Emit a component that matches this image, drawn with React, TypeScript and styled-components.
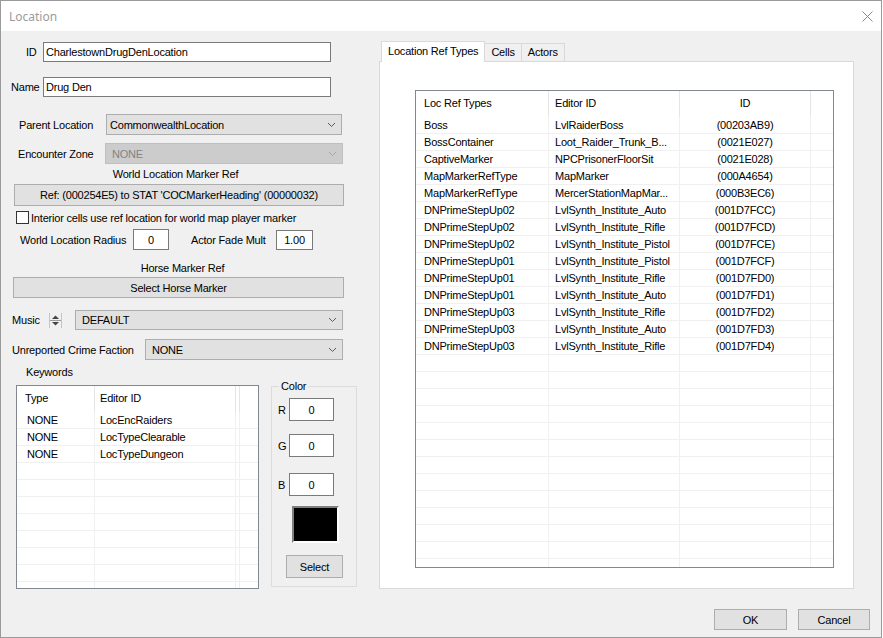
import React from 'react';
import styled, { createGlobalStyle } from 'styled-components';

const GlobalStyle = createGlobalStyle`
  * { box-sizing: border-box; }
  html, body { margin: 0; padding: 0; background: #ffffff; }
  body {
    font-family: "Liberation Sans", Arial, sans-serif;
    font-size: 11px;
    letter-spacing: -0.2px;
    color: #000;
  }
`;

const Window = styled.div`
  width: 882px;
  height: 638px;
  border: 1px solid #9a9a9a;
  background: #f0f0f0;
  display: flex;
  flex-direction: column;
`;

const TitleBar = styled.div`
  height: 30px;
  flex: none;
  background: #fff;
  display: flex;
  align-items: center;
  justify-content: space-between;
  padding: 0 8px 0 8px;
`;

const TitleText = styled.span`
  font-family: "Noto Sans", "Liberation Sans", sans-serif;
  font-size: 12px;
  letter-spacing: 0;
  color: #9b9b9b;
`;

const Main = styled.div`
  display: flex;
  height: 558px;
  flex: none;
`;

const LeftPanel = styled.div`
  width: 378px;
  flex: none;
  display: flex;
  flex-direction: column;
`;

const Row = styled.div<{ $mt: number; $pl: number; $h: number }>`
  display: flex;
  align-items: center;
  flex: none;
  margin-top: ${p => p.$mt}px;
  padding-left: ${p => p.$pl}px;
  height: ${p => p.$h}px;
`;

const Label = styled.span<{ $w?: number; $ml?: number }>`
  flex: none;
  width: ${p => (p.$w ? `${p.$w}px` : 'auto')};
  margin-left: ${p => p.$ml ?? 0}px;
  white-space: nowrap;
`;

const Caption = styled.div<{ $mt: number; $pl: number; $w: number }>`
  flex: none;
  margin-top: ${p => p.$mt}px;
  margin-left: ${p => p.$pl}px;
  width: ${p => p.$w}px;
  line-height: 13px;
  text-align: center;
  white-space: nowrap;
`;

const TextBox = styled.input<{ $w: number; $h: number; $center?: boolean }>`
  flex: none;
  width: ${p => p.$w}px;
  height: ${p => p.$h}px;
  border: 1px solid #7a7a7a;
  background: #fff;
  padding: 0 2px;
  margin: 0;
  font: inherit;
  letter-spacing: inherit;
  color: #000;
  text-align: ${p => (p.$center ? 'center' : 'left')};
  outline: none;
`;

const Combo = styled.div<{ $w: number; $h: number; $pad: number; $disabled?: boolean }>`
  flex: none;
  width: ${p => p.$w}px;
  height: ${p => p.$h}px;
  display: flex;
  align-items: center;
  justify-content: space-between;
  padding: 0 6px 0 ${p => p.$pad}px;
  background: ${p => (p.$disabled ? '#cccccc' : '#e1e1e1')};
  border: 1px solid ${p => (p.$disabled ? '#bfbfbf' : '#adadad')};
  color: ${p => (p.$disabled ? '#838383' : '#000')};
  white-space: nowrap;
`;

const Button = styled.button<{ $w: number; $h: number; $ml?: number; $mt?: number }>`
  flex: none;
  width: ${p => p.$w}px;
  height: ${p => p.$h}px;
  margin: ${p => p.$mt ?? 0}px 0 0 ${p => p.$ml ?? 0}px;
  padding: 0;
  background: #e1e1e1;
  border: 1px solid #adadad;
  font: inherit;
  letter-spacing: inherit;
  color: #000;
  white-space: nowrap;
`;

const CheckBox = styled.span`
  flex: none;
  width: 13px;
  height: 13px;
  border: 1px solid #333;
  background: #fff;
  margin-right: 2px;
`;

const BottomArea = styled.div`
  display: flex;
  align-items: flex-start;
  margin-top: 6px;
  padding-left: 15px;
`;

const KeywordsColumn = styled.div`
  display: flex;
  flex-direction: column;
`;

const ColorGroup = styled.fieldset`
  margin: 14px 0 0 12px;
  padding: 0;
  width: 86px;
  height: 207px;
  min-width: 0;
  border: 1px solid #dcdcdc;
  display: flex;
  flex-direction: column;
`;

const Legend = styled.legend`
  margin-left: 7px;
  padding: 0 2px;
  line-height: 13px;
`;

const ColorRow = styled.div<{ $mt: number }>`
  display: flex;
  align-items: center;
  margin-top: ${p => p.$mt}px;
  padding-left: 6px;
`;

const Swatch = styled.div<{ $color: string }>`
  width: 47px;
  height: 37px;
  margin: 10px 0 0 20px;
  background: ${p => p.$color};
  border-style: solid;
  border-width: 2px;
  border-color: #7f7f7f #ffffff #ffffff #7f7f7f;
`;

const RightPanel = styled.div`
  display: flex;
  flex-direction: column;
  padding-top: 10px;
`;

const TabStrip = styled.div`
  display: flex;
  align-items: flex-end;
  height: 20px;
  padding-left: 2px;
`;

const Tab = styled.div<{ $active?: boolean }>`
  position: relative;
  z-index: ${p => (p.$active ? 1 : 0)};
  height: ${p => (p.$active ? 21 : 18)}px;
  margin-bottom: ${p => (p.$active ? -1 : 0)}px;
  padding: ${p => (p.$active ? '3px 6px 0' : '2px 6px 0')};
  background: ${p => (p.$active ? '#ffffff' : '#f0f0f0')};
  border: 1px solid #d9d9d9;
  border-bottom: none;
  border-left-width: ${p => (p.$active ? 1 : 0)}px;
  white-space: nowrap;
`;

const TabPanel = styled.div`
  width: 475px;
  height: 528px;
  background: #fff;
  border: 1px solid #d9d9d9;
  padding: 28px 0 0 35px;
`;

const Footer = styled.div`
  display: flex;
  justify-content: flex-end;
  gap: 11px;
  padding: 20px 11px 0 0;
`;

/* list view */

const ListFrame = styled.div<{ $w: number; $h: number; $mt?: number }>`
  flex: none;
  width: ${p => p.$w}px;
  height: ${p => p.$h}px;
  margin-top: ${p => p.$mt ?? 0}px;
  border: 1px solid #828790;
  background: #fff;
  overflow: hidden;
`;

const HeadRow = styled.div<{ $h: number }>`
  display: flex;
  height: ${p => p.$h}px;
`;

const HeadCell = styled.div<{ $w?: number; $pad: number; $center?: boolean }>`
  flex: ${p => (p.$w ? `0 0 ${p.$w}px` : '1 1 auto')};
  display: flex;
  align-items: center;
  justify-content: ${p => (p.$center ? 'center' : 'flex-start')};
  padding-left: ${p => (p.$center ? 0 : p.$pad)}px;
  padding-bottom: 2px;
  border-right: 1px solid #e5e5e5;
  white-space: nowrap;
  overflow: hidden;
  &:last-child { border-right: none; }
`;

const BodyRow = styled.div`
  display: flex;
  height: 17px;
  border-bottom: 1px solid #f0f0f0;
`;

const Cell = styled.div<{ $w?: number; $pad: number; $center?: boolean }>`
  flex: ${p => (p.$w ? `0 0 ${p.$w}px` : '1 1 auto')};
  display: flex;
  align-items: center;
  justify-content: ${p => (p.$center ? 'center' : 'flex-start')};
  padding-left: ${p => (p.$center ? 0 : p.$pad)}px;
  border-right: 1px solid #f0f0f0;
  white-space: nowrap;
  overflow: hidden;
  &:last-child { border-right: none; }
`;

interface Column {
  w?: number;
  head: string;
  hpad: number;
  bpad: number;
  center?: boolean;
}

interface ListProps {
  w: number;
  h: number;
  mt?: number;
  headH: number;
  columns: Column[];
  rows: string[][];
  total: number;
}

const ListView = ({ w, h, mt, headH, columns, rows, total }: ListProps) => (
  <ListFrame $w={w} $h={h} $mt={mt}>
    <HeadRow $h={headH}>
      {columns.map((c, i) => (
        <HeadCell key={i} $w={c.w} $pad={c.hpad} $center={c.center}>
          {c.head}
        </HeadCell>
      ))}
    </HeadRow>
    {Array.from({ length: total }).map((_, r) => (
      <BodyRow key={r}>
        {columns.map((c, i) => (
          <Cell key={i} $w={c.w} $pad={c.bpad} $center={c.center}>
            {rows[r]?.[i] ?? ''}
          </Cell>
        ))}
      </BodyRow>
    ))}
  </ListFrame>
);

const Chevron = ({ color = '#5a5a5a' }: { color?: string }) => (
  <svg width="7" height="4" viewBox="0 0 7 4">
    <polyline points="0,0 3.5,3.5 7,0" fill="none" stroke={color} strokeWidth="1" />
  </svg>
);

const Spinner = () => (
  <svg width="13" height="15" viewBox="0 0 13 15" style={{ flex: 'none', marginRight: 13 }}>
    <line x1="0.5" y1="0" x2="0.5" y2="15" stroke="#c4c4c4" />
    <line x1="12.5" y1="0" x2="12.5" y2="15" stroke="#c4c4c4" />
    <polygon points="3,6 10,6 6.5,2.5" fill="#444" />
    <line x1="1" y1="7.5" x2="12" y2="7.5" stroke="#9a9a9a" />
    <polygon points="3,9 10,9 6.5,12.5" fill="#444" />
  </svg>
);

const CloseIcon = () => (
  <svg width="11" height="11" viewBox="0 0 11 11">
    <line x1="0.5" y1="0.5" x2="10.5" y2="10.5" stroke="#8a8a8a" />
    <line x1="10.5" y1="0.5" x2="0.5" y2="10.5" stroke="#8a8a8a" />
  </svg>
);

const refRows = [
  ['Boss', 'LvlRaiderBoss', '(00203AB9)'],
  ['BossContainer', 'Loot_Raider_Trunk_B...', '(0021E027)'],
  ['CaptiveMarker', 'NPCPrisonerFloorSit', '(0021E028)'],
  ['MapMarkerRefType', 'MapMarker', '(000A4654)'],
  ['MapMarkerRefType', 'MercerStationMapMar...', '(000B3EC6)'],
  ['DNPrimeStepUp02', 'LvlSynth_Institute_Auto', '(001D7FCC)'],
  ['DNPrimeStepUp02', 'LvlSynth_Institute_Rifle', '(001D7FCD)'],
  ['DNPrimeStepUp02', 'LvlSynth_Institute_Pistol', '(001D7FCE)'],
  ['DNPrimeStepUp01', 'LvlSynth_Institute_Pistol', '(001D7FCF)'],
  ['DNPrimeStepUp01', 'LvlSynth_Institute_Rifle', '(001D7FD0)'],
  ['DNPrimeStepUp01', 'LvlSynth_Institute_Auto', '(001D7FD1)'],
  ['DNPrimeStepUp03', 'LvlSynth_Institute_Rifle', '(001D7FD2)'],
  ['DNPrimeStepUp03', 'LvlSynth_Institute_Auto', '(001D7FD3)'],
  ['DNPrimeStepUp03', 'LvlSynth_Institute_Rifle', '(001D7FD4)'],
];

const refColumns: Column[] = [
  { w: 133, head: 'Loc Ref Types', hpad: 8, bpad: 8 },
  { w: 131, head: 'Editor ID', hpad: 6, bpad: 6 },
  { w: 131, head: 'ID', hpad: 0, bpad: 0, center: true },
  { head: '', hpad: 0, bpad: 0 },
];

const keywordRows = [
  ['NONE', 'LocEncRaiders'],
  ['NONE', 'LocTypeClearable'],
  ['NONE', 'LocTypeDungeon'],
];

const keywordColumns: Column[] = [
  { w: 78, head: 'Type', hpad: 8, bpad: 10 },
  { w: 141, head: 'Editor ID', hpad: 5, bpad: 5 },
  { w: 4, head: '', hpad: 0, bpad: 0 },
  { head: '', hpad: 0, bpad: 0 },
];

const App = () => {
  return (
    <>
      <GlobalStyle />
      <Window>
        <TitleBar>
          <TitleText>Location</TitleText>
          <CloseIcon />
        </TitleBar>

        <Main>
          <LeftPanel>
            <Row $mt={11} $pl={25} $h={20}>
              <Label $w={17}>ID</Label>
              <TextBox $w={288} $h={20} readOnly value="CharlestownDrugDenLocation" />
            </Row>
            <Row $mt={15} $pl={10} $h={20}>
              <Label $w={32}>Name</Label>
              <TextBox $w={288} $h={20} readOnly value="Drug Den" />
            </Row>
            <Row $mt={17} $pl={18} $h={21}>
              <Label $w={87}>Parent Location</Label>
              <Combo $w={236} $h={21} $pad={3}>
                CommonwealthLocation
                <Chevron />
              </Combo>
            </Row>
            <Row $mt={8} $pl={17} $h={21}>
              <Label $w={87}>Encounter Zone</Label>
              <Combo $w={238} $h={21} $pad={6} $disabled>
                NONE
                <Chevron color="#a8a8a8" />
              </Combo>
            </Row>

            <Caption $mt={4} $pl={0} $w={349}>World Location Marker Ref</Caption>
            <Row $mt={3} $pl={13} $h={22}>
              <Button $w={330} $h={22}>
                Ref: (000254E5) to STAT 'COCMarkerHeading' (00000032)
              </Button>
            </Row>
            <Row $mt={5} $pl={15} $h={13}>
              <CheckBox />
              <Label>Interior cells use ref location for world map player marker</Label>
            </Row>
            <Row $mt={5} $pl={19} $h={21}>
              <Label $w={113}>World Location Radius</Label>
              <TextBox $w={36} $h={21} $center readOnly value="0" />
              <Label $w={85} $ml={22}>Actor Fade Mult</Label>
              <TextBox $w={37} $h={20} $center readOnly value="1.00" />
            </Row>

            <Caption $mt={12} $pl={13} $w={337}>Horse Marker Ref</Caption>
            <Row $mt={2} $pl={12} $h={21}>
              <Button $w={331} $h={21}>Select Horse Marker</Button>
            </Row>
            <Row $mt={12} $pl={11} $h={20}>
              <Label $w={37}>Music</Label>
              <Spinner />
              <Combo $w={268} $h={20} $pad={6}>
                DEFAULT
                <Chevron />
              </Combo>
            </Row>
            <Row $mt={9} $pl={11} $h={21}>
              <Label $w={133}>Unreported Crime Faction</Label>
              <Combo $w={198} $h={21} $pad={6}>
                NONE
                <Chevron />
              </Combo>
            </Row>

            <BottomArea>
              <KeywordsColumn>
                <Caption $mt={0} $pl={10} $w={46}>Keywords</Caption>
                <ListView
                  w={243}
                  h={204}
                  mt={6}
                  headH={26}
                  columns={keywordColumns}
                  rows={keywordRows}
                  total={11}
                />
              </KeywordsColumn>

              <ColorGroup>
                <Legend>Color</Legend>
                <ColorRow $mt={5}>
                  <Label $w={11}>R</Label>
                  <TextBox $w={45} $h={23} $center readOnly value="0" />
                </ColorRow>
                <ColorRow $mt={13}>
                  <Label $w={11}>G</Label>
                  <TextBox $w={45} $h={23} $center readOnly value="0" />
                </ColorRow>
                <ColorRow $mt={16}>
                  <Label $w={11}>B</Label>
                  <TextBox $w={45} $h={23} $center readOnly value="0" />
                </ColorRow>
                <Swatch $color="#000000" />
                <Button $w={57} $h={23} $ml={14} $mt={12}>Select</Button>
              </ColorGroup>
            </BottomArea>
          </LeftPanel>

          <RightPanel>
            <TabStrip>
              <Tab $active>Location Ref Types</Tab>
              <Tab>Cells</Tab>
              <Tab>Actors</Tab>
            </TabStrip>
            <TabPanel>
              <ListView
                w={419}
                h={478}
                headH={26}
                columns={refColumns}
                rows={refRows}
                total={27}
              />
            </TabPanel>
          </RightPanel>
        </Main>

        <Footer>
          <Button $w={73} $h={21}>OK</Button>
          <Button $w={72} $h={21}>Cancel</Button>
        </Footer>
      </Window>
    </>
  );
};

export default App;
